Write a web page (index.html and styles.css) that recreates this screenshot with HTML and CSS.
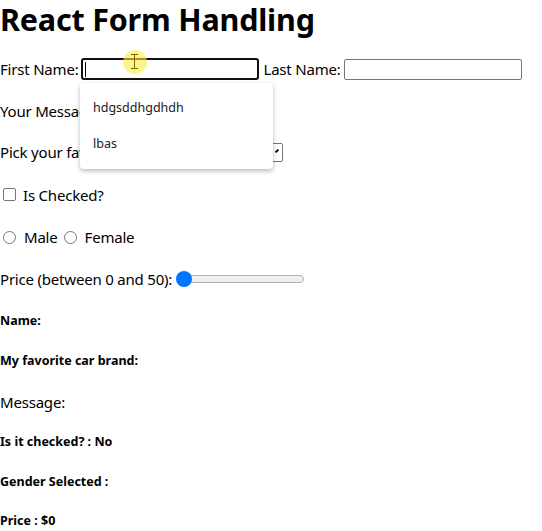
FILE: index.html
```html
<!DOCTYPE html>
<html>
<head>
<meta charset="utf-8">
<link rel="stylesheet" href="styles.css">
</head>
<body>
<div class="app">
  <h1 class="title">React Form Handling</h1>
  <div class="row r1">
    <label class="lbl">First Name:</label>
    <span class="field focused"><span class="caret"></span></span>
    <label class="lbl gap">Last Name:</label>
    <span class="field"></span>
  </div>
  <div class="row r2"><label class="lbl">Your Message:</label><span class="hiddenarea"></span></div>
  <div class="row r3">
    <label class="lbl">Pick your favorite car brand:</label>
    <span class="select"><span class="arrow"></span></span>
  </div>
  <div class="row r4">
    <span class="check"></span><label class="lbl">Is Checked?</label>
  </div>
  <div class="row r5">
    <span class="radio"></span><label class="lbl">Male</label>
    <span class="radio r2nd"></span><label class="lbl">Female</label>
  </div>
  <div class="row r6">
    <label class="lbl">Price (between 0 and 50):</label>
    <span class="range"><span class="track"></span><span class="thumb"></span></span>
  </div>
  <div class="row r7"><h5 class="out">Name:</h5></div>
  <div class="row r8"><h5 class="out">My favorite car brand:</h5></div>
  <div class="row r9"><span class="lbl">Message:</span></div>
  <div class="row r10"><h5 class="out">Is it checked? : No</h5></div>
  <div class="row r11"><h5 class="out">Gender Selected :</h5></div>
  <div class="row r12"><h5 class="out">Price : $0</h5></div>

  <div class="suggest">
    <div class="opt">hdgsddhgdhdh</div>
    <div class="opt">lbas</div>
  </div>
  <div class="cursor"><span class="beam"></span></div>
</div>
</body>
</html>
```

FILE: styles.css
```css
html, body {
  margin: 0;
  padding: 0;
  background: #ffffff;
}
body {
  font-family: "Noto Sans", "Open Sans", sans-serif;
  color: #000;
  width: 542px;
  height: 531px;
  overflow: hidden;
}
.app {
  position: relative;
  display: flex;
  flex-direction: column;
}
.title {
  margin: 0;
  font-size: 30.5px;
  font-weight: 700;
  line-height: 38px;
  height: 48px;
  padding-top: 0;
  box-sizing: border-box;
  letter-spacing: -0.2px;
}
.row {
  display: flex;
  align-items: center;
  white-space: nowrap;
}
.r1 { height: 42px; }
.r2 { height: 41px; }
.r3 { height: 42px; }
.r4 { height: 43px; }
.r5 { height: 42px; }
.r6 { height: 42px; }
.r7 { height: 41px; }
.r8 { height: 40px; }
.r9 { height: 41px; }
.r10 { height: 40px; }
.r11 { height: 40px; }
.r12 { height: 38px; }
.lbl {
  font-size: 15px;
  letter-spacing: -0.2px;
  line-height: 20px;
  color: #000;
}
.gap { margin-left: 4px; }
.field {
  display: inline-block;
  box-sizing: border-box;
  width: 178px;
  height: 21px;
  border: 1px solid #767676;
  border-radius: 2px;
  margin-left: 3px;
  position: relative;
}
.field.focused {
  border: 2px solid #101010;
  border-radius: 3px;
  height: 22px;
}
.caret {
  position: absolute;
  left: 2px;
  top: 2px;
  width: 1px;
  height: 15px;
  background: #000;
}
.hiddenarea {
  display: inline-block;
  width: 150px;
  height: 20px;
}
.select {
  display: inline-block;
  position: relative;
  width: 87px;
  height: 19px;
  border: 1px solid #767676;
  border-radius: 2px;
  margin-left: 4px;
  box-sizing: border-box;
}
.arrow {
  position: absolute;
  right: 3px;
  top: 6px;
  width: 4px;
  height: 2px;
  background: #000;
  transform: rotate(-45deg);
}
.check {
  display: inline-block;
  box-sizing: border-box;
  width: 13px;
  height: 13px;
  border: 1px solid #767676;
  border-radius: 2px;
  margin: 0 7px 0 3px;
}
.radio {
  display: inline-block;
  box-sizing: border-box;
  width: 13px;
  height: 13px;
  border: 1px solid #767676;
  border-radius: 50%;
  margin: 0 8px 0 3px;
}
.radio.r2nd { margin-left: 6px; }
.range {
  display: inline-block;
  position: relative;
  width: 128px;
  height: 16px;
  margin-left: 4px;
}
.track {
  position: absolute;
  left: 2px;
  right: 0;
  top: 4px;
  height: 8px;
  box-sizing: border-box;
  background: #efefef;
  border: 1px solid #b2b2b2;
  border-radius: 4px;
}
.thumb {
  position: absolute;
  left: 0;
  top: 0;
  width: 16px;
  height: 16px;
  border-radius: 50%;
  background: #0075ff;
}
.out {
  margin: 0;
  font-size: 12.5px;
  font-weight: 700;
  line-height: 18px;
}
.suggest {
  position: absolute;
  left: 80px;
  top: 83px;
  width: 193px;
  height: 86px;
  background: #fff;
  border-radius: 4px;
  box-shadow: 0 2px 5px rgba(0,0,0,0.28);
  display: flex;
  flex-direction: column;
  padding-top: 6px;
  box-sizing: border-box;
}
.opt {
  height: 36px;
  display: flex;
  align-items: center;
  padding-left: 13px;
  font-size: 12.5px;
  color: #202124;
}
.cursor {
  position: absolute;
  left: 123px;
  top: 50px;
  width: 24px;
  height: 24px;
  border-radius: 50%;
  background: rgba(250, 240, 60, 0.6);
}
.beam {
  position: absolute;
  left: 11px;
  top: 4px;
  width: 1px;
  height: 15px;
  background: #806000;
}
.beam::before, .beam::after {
  content: "";
  position: absolute;
  left: -3px;
  width: 7px;
  height: 1px;
  background: #806000;
}
.beam::before { top: 0; }
.beam::after { bottom: 0; }
```
